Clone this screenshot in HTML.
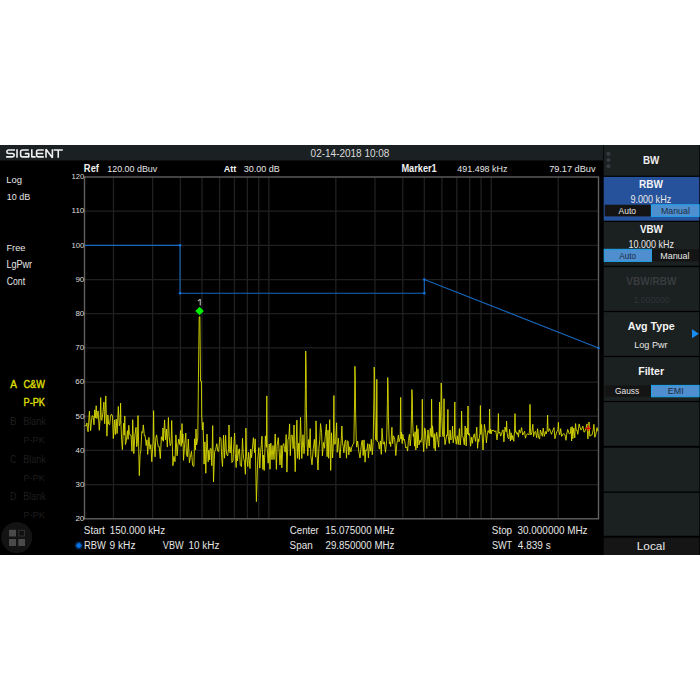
<!DOCTYPE html>
<html><head><meta charset="utf-8"><style>
html,body{margin:0;padding:0;background:#fff;width:700px;height:700px;overflow:hidden}
svg{display:block;font-family:"Liberation Sans",sans-serif}
</style></head><body>
<svg width="700" height="700" viewBox="0 0 700 700">
<rect width="700" height="700" fill="#fff"/>
<rect x="0" y="145" width="700" height="410" fill="#000"/>
<rect x="0" y="145" width="603" height="15.5" fill="#1b2022"/>
<path d="M15 150H8.6Q6.9 150 6.9 151.7V151.9Q6.9 153.5 8.6 153.5H12.5Q14.2 153.5 14.2 155.2V155.3Q14.2 156.9 12.5 156.9H6.1M17 149.2V157.7M28.8 150H22.5Q20.6 150 20.6 151.9V155Q20.6 156.9 22.5 156.9H28.8V153.6H24.8M31.8 149.2V156.9H35.6M43.8 150H38.2Q36.6 150 36.6 151.6V155.3Q36.6 156.9 38.2 156.9H43.8M36.6 153.5H43.2M46 157.7V149.2L52.4 157.7V149.2M53.7 150H62.8M58.25 150V157.7" stroke="#f0f0f0" stroke-width="1.6" stroke-linejoin="bevel" fill="none"/>
<text x="310.61" y="157.00" font-size="10.76" font-weight="normal" fill="#dcdcdc" textLength="78.82" lengthAdjust="spacingAndGlyphs">02-14-2018 10:08</text>
<text x="83.87" y="172.40" font-size="10.03" font-weight="bold" fill="#f0f0f0" textLength="15.11" lengthAdjust="spacingAndGlyphs">Ref</text>
<text x="107.32" y="172.30" font-size="9.88" font-weight="normal" fill="#e6e6e6" textLength="49.91" lengthAdjust="spacingAndGlyphs">120.00 dBuv</text>
<text x="223.68" y="172.20" font-size="9.16" font-weight="bold" fill="#f0f0f0" textLength="12.54" lengthAdjust="spacingAndGlyphs">Att</text>
<text x="243.66" y="172.20" font-size="9.88" font-weight="normal" fill="#e6e6e6" textLength="36.22" lengthAdjust="spacingAndGlyphs">30.00 dB</text>
<text x="401.38" y="172.30" font-size="10.03" font-weight="bold" fill="#f0f0f0" textLength="35.37" lengthAdjust="spacingAndGlyphs">Marker1</text>
<text x="457.30" y="172.30" font-size="9.88" font-weight="normal" fill="#e6e6e6" textLength="50.15" lengthAdjust="spacingAndGlyphs">491.498 kHz</text>
<text x="549.13" y="172.30" font-size="9.88" font-weight="normal" fill="#e6e6e6" textLength="46.40" lengthAdjust="spacingAndGlyphs">79.17 dBuv</text>
<text x="6.33" y="183.20" font-size="9.74" font-weight="normal" fill="#e6e6e6" textLength="15.68" lengthAdjust="spacingAndGlyphs">Log</text>
<text x="6.72" y="199.70" font-size="9.88" font-weight="normal" fill="#e6e6e6" textLength="23.46" lengthAdjust="spacingAndGlyphs">10 dB</text>
<text x="6.44" y="251.40" font-size="9.74" font-weight="normal" fill="#e6e6e6" textLength="18.97" lengthAdjust="spacingAndGlyphs">Free</text>
<text x="6.46" y="268.20" font-size="10.17" font-weight="normal" fill="#e6e6e6" textLength="25.69" lengthAdjust="spacingAndGlyphs">LgPwr</text>
<text x="6.76" y="284.80" font-size="10.17" font-weight="normal" fill="#e6e6e6" textLength="18.30" lengthAdjust="spacingAndGlyphs">Cont</text>
<text x="10.18" y="387.90" font-size="11.48" font-weight="normal" fill="#e8e800" textLength="6.64" lengthAdjust="spacingAndGlyphs" stroke="#d8d800" stroke-width="0.4">A</text>
<text x="23.54" y="387.90" font-size="11.48" font-weight="normal" fill="#e8e800" textLength="21.29" lengthAdjust="spacingAndGlyphs" stroke="#d8d800" stroke-width="0.4">C&amp;W</text>
<text x="23.55" y="405.50" font-size="10.90" font-weight="normal" fill="#e8e800" textLength="21.35" lengthAdjust="spacingAndGlyphs" stroke="#d8d800" stroke-width="0.4">P-PK</text>
<text x="9.90" y="425.10" font-size="10.32" font-weight="normal" fill="#1e1e1e" textLength="6.52" lengthAdjust="spacingAndGlyphs">B</text>
<text x="23.26" y="425.10" font-size="10.32" font-weight="normal" fill="#1e1e1e" textLength="22.53" lengthAdjust="spacingAndGlyphs">Blank</text>
<text x="23.24" y="442.80" font-size="9.88" font-weight="normal" fill="#1e1e1e" textLength="21.67" lengthAdjust="spacingAndGlyphs">P-PK</text>
<text x="10.28" y="462.90" font-size="10.32" font-weight="normal" fill="#1e1e1e" textLength="5.93" lengthAdjust="spacingAndGlyphs">C</text>
<text x="23.26" y="462.90" font-size="10.32" font-weight="normal" fill="#1e1e1e" textLength="22.53" lengthAdjust="spacingAndGlyphs">Blank</text>
<text x="23.24" y="480.60" font-size="9.88" font-weight="normal" fill="#1e1e1e" textLength="21.67" lengthAdjust="spacingAndGlyphs">P-PK</text>
<text x="9.98" y="500.40" font-size="10.32" font-weight="normal" fill="#1e1e1e" textLength="6.34" lengthAdjust="spacingAndGlyphs">D</text>
<text x="23.26" y="500.40" font-size="10.32" font-weight="normal" fill="#1e1e1e" textLength="22.53" lengthAdjust="spacingAndGlyphs">Blank</text>
<text x="23.24" y="518.10" font-size="9.88" font-weight="normal" fill="#1e1e1e" textLength="21.67" lengthAdjust="spacingAndGlyphs">P-PK</text>
<path d="M113.48 177.0V518.8M152.64 177.0V518.8M180.42 177.0V518.8M201.97 177.0V518.8M219.57 177.0V518.8M234.46 177.0V518.8M247.35 177.0V518.8M258.73 177.0V518.8M268.90 177.0V518.8M335.84 177.0V518.8M374.99 177.0V518.8M402.77 177.0V518.8M424.32 177.0V518.8M441.93 177.0V518.8M456.81 177.0V518.8M469.71 177.0V518.8M481.08 177.0V518.8M491.26 177.0V518.8M558.19 177.0V518.8M84.5 211.18H598.5M84.5 245.36H598.5M84.5 279.54H598.5M84.5 313.72H598.5M84.5 347.90H598.5M84.5 382.08H598.5M84.5 416.26H598.5M84.5 450.44H598.5M84.5 484.62H598.5" stroke="#202020" stroke-width="1.3" fill="none"/>
<rect x="84.5" y="177.0" width="514.0" height="341.79999999999995" stroke="#606060" stroke-width="1.4" fill="none"/>
<text x="71.52" y="179.30" font-size="7.56" font-weight="normal" fill="#dedede" textLength="12.78" lengthAdjust="spacingAndGlyphs">120</text>
<text x="71.52" y="213.48" font-size="7.56" font-weight="normal" fill="#dedede" textLength="12.78" lengthAdjust="spacingAndGlyphs">110</text>
<text x="71.52" y="247.66" font-size="7.56" font-weight="normal" fill="#dedede" textLength="12.78" lengthAdjust="spacingAndGlyphs">100</text>
<text x="75.43" y="281.84" font-size="7.56" font-weight="normal" fill="#dedede" textLength="8.89" lengthAdjust="spacingAndGlyphs">90</text>
<text x="75.45" y="316.02" font-size="7.56" font-weight="normal" fill="#dedede" textLength="8.86" lengthAdjust="spacingAndGlyphs">80</text>
<text x="75.39" y="350.20" font-size="7.56" font-weight="normal" fill="#dedede" textLength="8.92" lengthAdjust="spacingAndGlyphs">70</text>
<text x="75.39" y="384.38" font-size="7.56" font-weight="normal" fill="#dedede" textLength="8.92" lengthAdjust="spacingAndGlyphs">60</text>
<text x="75.48" y="418.56" font-size="7.56" font-weight="normal" fill="#dedede" textLength="8.83" lengthAdjust="spacingAndGlyphs">50</text>
<text x="75.62" y="452.74" font-size="7.56" font-weight="normal" fill="#dedede" textLength="8.68" lengthAdjust="spacingAndGlyphs">40</text>
<text x="75.50" y="486.92" font-size="7.56" font-weight="normal" fill="#dedede" textLength="8.81" lengthAdjust="spacingAndGlyphs">30</text>
<text x="75.40" y="521.10" font-size="7.56" font-weight="normal" fill="#dedede" textLength="8.92" lengthAdjust="spacingAndGlyphs">20</text>
<polyline points="84.50,245.36 180.00,245.36 180.00,293.21 424.32,293.21 424.32,279.54 598.50,347.90" stroke="#1767bd" stroke-width="1.05" fill="none"/>
<circle cx="180.00" cy="245.36" r="1.25" fill="#1575e0"/>
<circle cx="180.00" cy="293.21" r="1.25" fill="#1575e0"/>
<circle cx="424.32" cy="293.21" r="1.25" fill="#1575e0"/>
<circle cx="424.32" cy="279.54" r="1.25" fill="#1575e0"/>
<circle cx="598.50" cy="347.90" r="1.25" fill="#1575e0"/>
<polyline points="84.5,425.9 85.5,425.6 86.3,425.9 86.9,422.9 87.5,428.9 88.1,431.8 89.4,411.1 90.6,430.6 91.3,422.9 92.1,415.9 93.1,415.9 94.0,424.8 94.7,409.9 95.5,417.9 96.2,405.7 96.9,418.6 98.1,410.9 99.3,430.3 100.2,417.4 100.7,397.6 101.2,418.4 101.9,420.3 103.0,411.6 103.9,402.1 104.7,423.8 105.8,395.9 106.9,436.2 107.9,414.9 108.6,424.0 109.7,424.8 110.5,416.3 111.4,414.1 112.5,416.0 113.3,438.6 114.5,419.9 115.3,434.6 116.2,419.1 117.1,433.6 118.3,406.5 119.3,425.7 120.1,423.4 120.6,403.2 121.0,424.4 121.6,439.3 122.4,449.6 123.6,423.3 124.2,435.1 124.8,416.1 125.4,444.6 126.2,441.8 127.5,430.7 128.1,439.3 128.8,425.3 129.4,433.9 130.1,435.1 131.0,435.2 132.0,451.3 132.7,419.7 133.8,453.7 134.9,434.8 136.0,427.4 136.7,446.7 137.3,443.7 138.0,415.6 139.3,475.6 140.1,454.5 140.8,451.0 141.8,431.6 142.7,432.7 143.3,424.9 144.4,435.9 145.1,435.5 146.2,445.6 147.0,439.8 147.7,454.4 148.9,437.4 150.0,449.2 150.8,444.6 151.8,461.7 153.2,439.4 153.6,410.6 154.0,440.4 155.1,456.8 155.7,438.7 156.6,434.9 157.5,442.7 158.4,446.8 159.2,446.4 160.3,458.6 161.4,436.7 162.6,440.3 163.0,428.0 163.4,441.3 164.6,419.9 165.5,439.9 166.4,429.1 167.3,447.1 168.4,417.5 169.1,436.3 170.2,445.7 171.1,443.4 171.7,420.5 172.9,465.7 173.9,456.4 175.0,461.7 175.9,434.9 177.1,455.8 178.0,444.4 178.8,439.1 179.7,444.5 180.5,430.4 181.1,446.3 181.6,442.2 182.0,423.6 182.4,443.2 182.9,433.9 183.5,460.3 184.6,444.6 185.8,433.1 186.4,454.1 187.3,456.8 188.3,439.0 189.4,462.8 190.3,457.4 191.5,451.3 192.6,465.4 193.9,466.5 194.6,438.8 195.4,450.0 196.0,429.0 196.6,445.0 197.8,438.0 198.4,381.0 199.2,317.0 199.9,316.5 200.5,381.0 201.4,381.0 201.7,415.0 202.4,430.0 203.1,422.3 204.1,464.1 204.9,441.9 205.8,473.2 207.0,434.1 208.2,461.8 208.8,450.3 209.7,459.9 210.2,448.6 211.1,448.8 211.8,465.7 212.7,425.6 213.5,482.0 214.6,451.9 215.6,449.7 216.8,443.7 217.8,451.1 218.7,451.5 219.8,437.2 221.0,438.8 221.7,457.6 222.5,466.5 223.5,435.3 224.5,458.2 225.6,435.2 226.5,453.8 227.6,456.0 228.6,448.7 229.0,425.0 229.4,449.7 230.2,453.0 231.3,436.9 231.9,462.5 233.0,460.9 233.5,450.9 234.6,433.0 235.3,453.7 236.2,467.5 236.9,444.7 237.4,461.0 238.7,450.5 239.4,448.8 240.3,465.3 241.5,466.6 242.5,438.3 243.2,453.4 243.7,458.3 244.6,462.3 245.4,474.3 245.9,428.1 246.6,456.4 247.8,466.5 248.6,452.3 249.4,460.7 250.0,468.5 250.7,449.0 251.5,457.7 252.3,449.8 253.4,437.7 254.6,452.7 255.2,438.9 256.4,501.6 257.7,460.5 258.8,447.6 259.8,468.1 260.6,452.4 261.3,444.7 262.0,436.2 262.9,469.3 263.5,455.1 264.2,470.5 265.4,435.9 266.4,447.3 266.8,395.9 267.2,448.3 268.2,463.2 269.2,444.1 270.0,469.2 270.8,443.1 272.0,459.7 273.0,445.5 274.0,459.6 275.2,434.0 276.4,469.4 277.1,445.7 278.3,437.6 280.0,465.0 281.2,445.4 281.8,467.9 282.8,445.9 283.7,443.5 284.5,448.7 285.2,452.2 286.2,434.6 286.9,472.1 288.0,439.8 288.9,437.0 289.6,423.9 290.3,455.6 291.2,435.2 292.3,435.3 293.0,448.7 293.6,444.6 294.0,425.0 294.4,445.6 295.2,471.7 296.1,445.5 296.9,420.1 297.6,458.3 298.8,443.1 299.4,459.5 300.5,417.4 301.8,458.5 303.0,434.7 304.0,453.7 304.7,444.9 305.4,389.4 305.7,351.1 306.1,365.5 306.4,408.6 307.1,442.9 307.8,455.7 308.6,439.5 309.4,447.7 310.2,428.6 310.8,455.6 312.0,464.8 313.2,449.2 314.4,439.4 315.5,457.1 316.0,420.9 317.0,454.3 318.0,470.0 318.9,448.1 319.8,439.7 320.5,423.6 321.6,432.7 322.4,455.8 323.5,442.4 324.6,448.3 325.1,437.9 326.4,424.3 327.1,456.7 328.0,430.1 328.7,458.3 329.7,419.7 330.7,470.4 331.5,432.8 332.6,458.0 333.4,443.2 333.9,395.5 334.3,444.2 335.5,443.8 336.6,422.8 337.2,452.3 338.4,438.2 339.1,449.5 340.0,458.0 341.2,440.4 341.9,426.0 342.5,442.7 343.2,446.5 343.9,452.8 344.9,441.5 345.7,439.9 346.5,458.2 347.4,440.9 348.2,441.4 348.8,454.9 349.7,446.8 350.9,451.9 351.7,447.3 352.9,444.6 353.9,443.0 354.6,397.8 354.9,366.3 355.3,378.1 355.6,413.5 356.3,441.0 356.7,447.2 357.7,441.1 358.7,450.8 360.0,458.0 361.6,442.4 362.3,440.2 363.2,455.5 364.0,439.9 365.1,462.2 365.8,450.0 366.9,450.3 367.8,443.6 368.4,457.8 369.6,444.3 370.7,451.2 371.3,439.4 372.3,454.8 373.2,441.6 373.9,397.7 374.2,367.1 374.6,378.6 374.9,413.0 375.6,439.6 376.4,440.3 376.8,379.3 377.2,441.3 378.4,442.2 379.3,449.1 380.4,440.9 381.3,454.3 382.0,428.3 383.1,444.2 384.3,441.8 385.5,452.3 386.7,440.2 387.4,403.4 387.7,377.5 388.1,387.2 388.4,416.3 389.1,438.2 389.4,443.9 390.1,442.2 390.7,446.5 391.9,427.3 392.6,443.6 393.5,435.8 394.7,439.2 395.8,455.5 396.8,443.7 397.6,440.3 398.4,435.0 399.0,441.8 400.2,438.0 400.7,397.4 401.1,439.0 401.4,432.0 402.2,443.6 402.8,434.3 403.7,440.2 404.4,439.2 405.0,443.0 405.8,448.0 406.8,446.8 407.6,451.1 408.4,440.7 409.4,434.3 410.2,445.9 410.9,438.4 411.6,409.9 411.9,389.6 412.3,397.2 412.6,420.1 413.3,436.4 413.8,433.6 414.6,446.2 415.1,431.7 415.8,450.0 416.7,425.4 417.3,448.0 417.9,428.8 419.0,444.9 420.0,440.3 420.9,442.3 421.9,436.9 422.3,399.2 422.8,437.9 423.7,451.7 424.6,427.9 425.3,429.9 426.0,441.0 426.8,448.5 428.0,429.9 429.2,445.9 430.3,428.4 431.2,436.4 431.6,399.2 432.1,437.4 432.5,425.9 433.3,434.7 434.1,448.4 434.7,433.7 435.3,450.9 436.1,437.5 436.7,432.3 437.7,439.8 438.7,447.2 439.1,436.0 439.5,402.0 439.9,437.0 440.9,405.4 441.2,383.0 441.6,391.4 441.9,416.5 442.6,434.9 443.1,436.8 443.6,435.7 444.0,398.7 444.4,436.7 445.0,444.7 445.8,440.0 446.6,435.0 447.4,435.5 447.9,409.4 448.3,436.5 449.3,443.6 450.1,430.1 450.8,440.0 451.9,438.7 452.6,426.1 453.2,442.8 454.4,435.0 454.8,402.0 455.2,436.0 456.3,444.2 457.3,435.7 458.3,444.5 459.4,428.6 460.2,445.0 461.2,434.6 461.6,411.0 462.1,435.6 463.1,437.1 464.3,444.9 465.2,426.0 466.2,445.9 466.8,428.0 467.6,434.1 468.0,406.0 468.4,435.1 469.0,433.2 469.9,436.7 470.6,446.2 471.7,437.2 472.4,443.3 473.1,437.9 474.3,433.8 475.5,441.4 476.8,427.1 477.6,448.3 478.3,438.9 478.8,441.7 479.9,433.4 480.4,405.6 480.8,434.4 481.6,424.5 483.0,450.0 484.4,424.3 485.6,432.2 486.4,442.9 487.1,435.8 488.1,430.5 489.2,432.8 489.6,409.0 490.1,433.8 490.5,429.1 491.3,433.7 491.9,430.0 493.0,430.8 493.6,429.9 494.6,432.0 495.8,430.7 497.0,439.9 497.9,432.3 498.4,413.6 498.8,433.3 499.8,432.1 500.6,436.1 501.4,434.6 502.5,430.2 503.2,429.9 503.9,441.8 505.0,427.1 506.2,431.8 506.6,421.0 507.1,432.8 507.9,437.6 508.8,438.9 509.6,429.4 510.4,441.0 511.1,432.8 511.9,439.8 512.7,435.5 513.8,441.3 514.5,431.3 515.0,413.6 515.5,432.3 516.1,431.6 517.2,434.5 517.8,432.7 518.5,437.2 519.2,429.8 519.9,432.5 520.5,432.8 521.6,427.6 522.7,435.1 523.8,432.7 524.6,431.2 525.4,438.2 526.3,435.5 526.9,434.3 527.8,433.8 529.0,434.9 529.5,430.8 530.0,404.4 530.5,431.8 530.8,435.0 531.8,432.7 532.8,424.3 533.6,436.5 534.5,432.4 535.5,431.3 536.7,437.8 537.6,428.7 538.5,437.0 539.6,439.1 540.4,430.0 541.3,432.9 542.4,436.3 543.2,428.0 544.3,436.4 545.5,431.5 546.2,434.0 547.1,430.3 547.6,415.0 548.1,431.3 548.5,431.6 549.5,428.7 550.5,431.5 551.5,434.3 552.1,432.4 553.2,429.5 554.0,427.6 554.9,438.7 555.8,435.1 556.8,431.7 557.9,430.0 558.4,422.4 558.9,431.0 559.7,434.8 560.7,428.7 561.6,436.4 562.6,434.9 563.1,433.8 563.8,433.8 564.9,434.6 566.0,440.3 566.7,434.3 567.7,429.4 568.3,431.0 569.2,433.7 570.4,433.3 571.0,427.2 571.6,441.0 572.2,426.6 572.8,438.7 573.7,428.2 574.8,437.8 575.1,429.2 575.6,423.6 576.1,430.2 576.9,429.9 577.8,434.3 579.1,423.9 579.9,426.9 581.0,430.1 581.8,428.8 582.9,426.2 584.0,432.2 584.7,431.9 585.8,428.9 587.0,423.9 587.9,438.9 589.0,422.0 589.8,436.2 590.9,435.3 592.1,434.8 593.2,430.0 593.9,424.3 594.8,437.3 595.8,434.3 597.0,427.6 597.9,431.4" stroke="#dada00" stroke-width="0.9" fill="none" stroke-linejoin="round"/>
<path d="M585.2 428.4H591.2M588.3 425.2V431.3" stroke="#e40000" stroke-width="1.1"/>
<path d="M199.6 306.8L203.9 311L199.6 315.2L195.3 311Z" fill="#00ee00"/>
<path d="M200.3 299V305.4M197.9 300.9L200.3 299.2" stroke="#a4a4a4" stroke-width="1.25" fill="none"/>
<text x="83.85" y="533.80" font-size="10.32" font-weight="normal" fill="#e6e6e6" textLength="20.92" lengthAdjust="spacingAndGlyphs">Start</text>
<text x="109.85" y="533.80" font-size="10.32" font-weight="normal" fill="#e6e6e6" textLength="55.24" lengthAdjust="spacingAndGlyphs">150.000 kHz</text>
<defs><radialGradient id="gl"><stop offset="0" stop-color="#0a6ee0" stop-opacity="0.9"/><stop offset="1" stop-color="#0a6ee0" stop-opacity="0"/></radialGradient></defs><circle cx="78.8" cy="545.5" r="5" fill="url(#gl)"/><path d="M78.8 542.6L81.7 545.5L78.8 548.4L75.9 545.5Z" fill="#0a72e6"/>
<text x="83.93" y="548.80" font-size="10.61" font-weight="normal" fill="#e6e6e6" textLength="21.80" lengthAdjust="spacingAndGlyphs">RBW</text>
<text x="109.52" y="548.80" font-size="10.61" font-weight="normal" fill="#e6e6e6" textLength="25.98" lengthAdjust="spacingAndGlyphs">9 kHz</text>
<text x="162.86" y="548.80" font-size="10.61" font-weight="normal" fill="#e6e6e6" textLength="20.77" lengthAdjust="spacingAndGlyphs">VBW</text>
<text x="188.54" y="548.80" font-size="10.61" font-weight="normal" fill="#e6e6e6" textLength="30.85" lengthAdjust="spacingAndGlyphs">10 kHz</text>
<text x="289.81" y="533.80" font-size="10.32" font-weight="normal" fill="#e6e6e6" textLength="28.95" lengthAdjust="spacingAndGlyphs">Center</text>
<text x="325.25" y="533.80" font-size="10.32" font-weight="normal" fill="#e6e6e6" textLength="69.24" lengthAdjust="spacingAndGlyphs">15.075000 MHz</text>
<text x="289.55" y="548.80" font-size="10.61" font-weight="normal" fill="#e6e6e6" textLength="23.09" lengthAdjust="spacingAndGlyphs">Span</text>
<text x="325.51" y="548.80" font-size="10.61" font-weight="normal" fill="#e6e6e6" textLength="68.98" lengthAdjust="spacingAndGlyphs">29.850000 MHz</text>
<text x="491.85" y="533.80" font-size="10.32" font-weight="normal" fill="#e6e6e6" textLength="20.26" lengthAdjust="spacingAndGlyphs">Stop</text>
<text x="517.62" y="533.80" font-size="10.32" font-weight="normal" fill="#e6e6e6" textLength="69.87" lengthAdjust="spacingAndGlyphs">30.000000 MHz</text>
<text x="491.88" y="548.80" font-size="10.61" font-weight="normal" fill="#e6e6e6" textLength="20.33" lengthAdjust="spacingAndGlyphs">SWT</text>
<text x="517.77" y="548.80" font-size="10.61" font-weight="normal" fill="#e6e6e6" textLength="32.89" lengthAdjust="spacingAndGlyphs">4.839 s</text>
<circle cx="16.75" cy="537.5" r="15.5" fill="#131313"/>
<rect x="9" y="529.8" width="7" height="6.7" fill="#4a4a4a"/>
<rect x="18.8" y="530.3" width="5.8" height="5.7" fill="#101010" stroke="#363636" stroke-width="0.9"/>
<rect x="9" y="539" width="7" height="7" fill="#4a4a4a"/>
<rect x="18.3" y="539" width="6.7" height="7" fill="#4a4a4a"/>
<rect x="603.7" y="145" width="95.59999999999991" height="30.7" fill="#1b2021"/>
<circle cx="608.4" cy="153.9" r="2.1" fill="#343c40"/>
<circle cx="608.4" cy="160.0" r="2.1" fill="#343c40"/>
<circle cx="608.4" cy="166.2" r="2.1" fill="#343c40"/>
<text x="642.94" y="163.90" font-size="10.90" font-weight="bold" fill="#f0f0f0" textLength="16.37" lengthAdjust="spacingAndGlyphs">BW</text>
<rect x="603.7" y="176.9" width="95.59999999999991" height="43.8" fill="#26529c"/>
<rect x="603.7" y="222.0" width="95.59999999999991" height="43.8" fill="#1b2021"/>
<rect x="603.7" y="267.1" width="95.59999999999991" height="43.8" fill="#1b2021"/>
<rect x="603.7" y="312.1" width="95.59999999999991" height="43.8" fill="#1b2021"/>
<rect x="603.7" y="357.1" width="95.59999999999991" height="43.8" fill="#1b2021"/>
<rect x="603.7" y="402.1" width="95.59999999999991" height="43.8" fill="#1b2021"/>
<rect x="603.7" y="447.7" width="95.59999999999991" height="43.8" fill="#1b2021"/>
<rect x="603.7" y="492.8" width="95.59999999999991" height="43.0" fill="#1b2021"/>
<rect x="603.7" y="537.7" width="95.59999999999991" height="17.3" fill="#151515"/>
<text x="639.03" y="187.90" font-size="10.47" font-weight="bold" fill="#f4f4f4" textLength="23.88" lengthAdjust="spacingAndGlyphs">RBW</text>
<text x="630.58" y="202.60" font-size="10.03" font-weight="normal" fill="#e8e8e8" textLength="40.57" lengthAdjust="spacingAndGlyphs">9.000 kHz</text>
<rect x="604.7" y="204.7" width="46" height="11.700000000000017" fill="#141414"/>
<rect x="651.5" y="204.7" width="47.6" height="11.700000000000017" fill="#4f8fd0" stroke="#1ea4ea" stroke-width="1"/>
<text x="618.58" y="213.60" font-size="9.01" font-weight="normal" fill="#e8e8e8" textLength="17.47" lengthAdjust="spacingAndGlyphs">Auto</text>
<text x="660.98" y="213.60" font-size="9.01" font-weight="normal" fill="#1d2b3c" textLength="28.91" lengthAdjust="spacingAndGlyphs">Manual</text>
<text x="639.93" y="232.90" font-size="10.61" font-weight="bold" fill="#f4f4f4" textLength="22.98" lengthAdjust="spacingAndGlyphs">VBW</text>
<text x="628.62" y="247.90" font-size="10.17" font-weight="normal" fill="#e8e8e8" textLength="45.43" lengthAdjust="spacingAndGlyphs">10.000 kHz</text>
<rect x="604.2" y="249.3" width="47.4" height="12.099999999999966" fill="#4f8fd0" stroke="#1ea4ea" stroke-width="1"/>
<rect x="652" y="249.3" width="47" height="12.099999999999966" fill="#141414"/>
<text x="619.28" y="258.60" font-size="9.01" font-weight="normal" fill="#1d2b3c" textLength="16.76" lengthAdjust="spacingAndGlyphs">Auto</text>
<text x="660.27" y="258.60" font-size="9.01" font-weight="normal" fill="#e8e8e8" textLength="29.23" lengthAdjust="spacingAndGlyphs">Manual</text>
<text x="626.33" y="285.00" font-size="10.17" font-weight="bold" fill="#383c3e" textLength="50.08" lengthAdjust="spacingAndGlyphs">VBW/RBW</text>
<text x="633.64" y="302.90" font-size="9.45" font-weight="normal" fill="#303436" textLength="35.99" lengthAdjust="spacingAndGlyphs">1.000000</text>
<text x="627.84" y="330.30" font-size="10.47" font-weight="bold" fill="#f4f4f4" textLength="46.81" lengthAdjust="spacingAndGlyphs">Avg Type</text>
<text x="634.26" y="347.90" font-size="9.74" font-weight="normal" fill="#e8e8e8" textLength="33.30" lengthAdjust="spacingAndGlyphs">Log Pwr</text>
<path d="M692 329.3L699 333.8L692 338.3Z" fill="#1a8cf0"/>
<text x="638.19" y="375.40" font-size="10.76" font-weight="bold" fill="#f4f4f4" textLength="25.97" lengthAdjust="spacingAndGlyphs">Filter</text>
<rect x="604.7" y="385.4" width="46" height="11.400000000000034" fill="#141414"/>
<rect x="651.5" y="385.4" width="47.6" height="11.400000000000034" fill="#4f8fd0" stroke="#1ea4ea" stroke-width="1"/>
<text x="614.98" y="394.00" font-size="9.59" font-weight="normal" fill="#e8e8e8" textLength="24.22" lengthAdjust="spacingAndGlyphs">Gauss</text>
<text x="667.87" y="394.00" font-size="9.59" font-weight="normal" fill="#1d2b3c" textLength="15.85" lengthAdjust="spacingAndGlyphs">EMI</text>
<text x="636.73" y="549.70" font-size="11.05" font-weight="normal" fill="#e8e8e8" textLength="28.37" lengthAdjust="spacingAndGlyphs">Local</text>
</svg>
</body></html>
